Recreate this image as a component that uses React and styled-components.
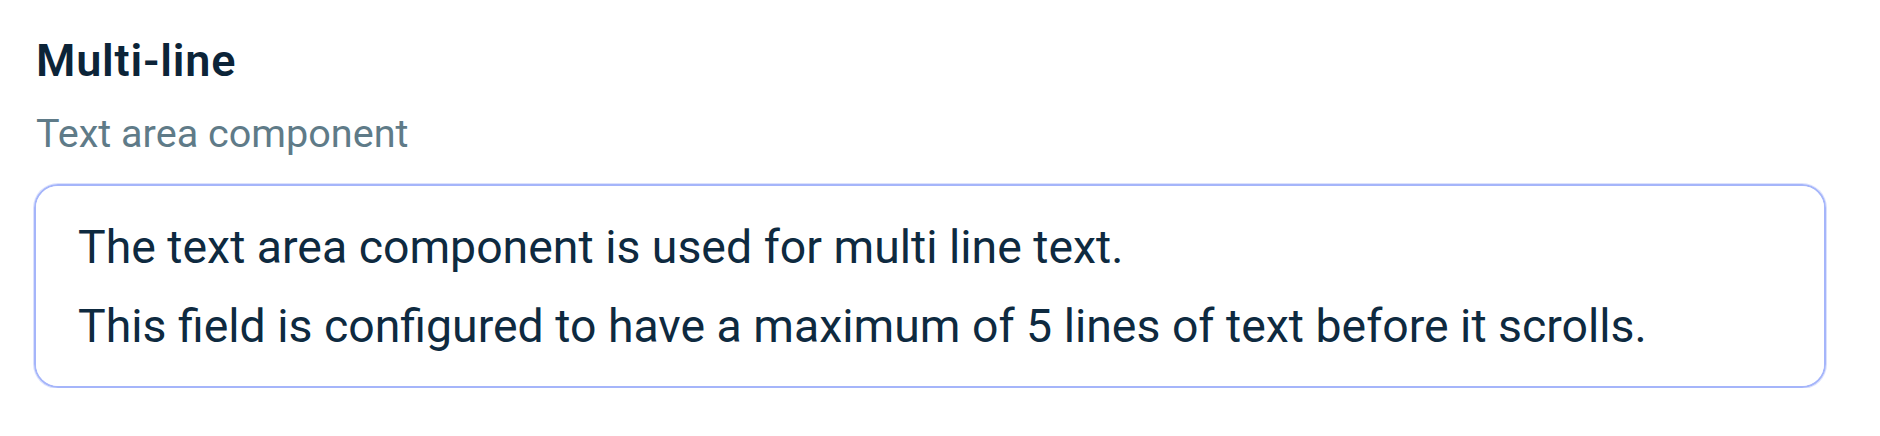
import React from "react";
import styled, { createGlobalStyle } from "styled-components";

const GlobalStyle = createGlobalStyle`
  html, body {
    margin: 0;
    padding: 0;
    background: #ffffff;
  }
  body {
    font-family: Roboto, "Noto Sans", sans-serif;
    -webkit-font-smoothing: antialiased;
  }
`;

const Section = styled.section`
  display: flex;
  flex-direction: column;
  padding: 29px 54px 0 34px;
`;

const Title = styled.h2`
  margin: 0;
  font-size: 45px;
  letter-spacing: 0.8px;
  line-height: 64px;
  font-weight: 600;
  color: #0c2438;
  padding-left: 2px;
`;

const Subtitle = styled.p`
  margin: 13px 0 0;
  font-size: 39.6px;
  line-height: 56px;
  font-weight: 400;
  color: #5f7b88;
  padding-left: 2px;
`;

const TextArea = styled.div`
  box-sizing: border-box;
  margin-top: 22px;
  height: 204px;
  border: 2px solid #a5b5fa;
  box-shadow: 0 0 0 1px rgba(165, 181, 250, 0.4);
  border-radius: 24px;
  padding: 22px 42px;
  overflow-y: auto;
  background: #ffffff;
`;

const Line = styled.p`
  margin: 0;
  font-size: 46.4px;
  line-height: 79px;
  color: #0e2a40;
  white-space: nowrap;
`;

export default function App() {
  const lines = [
    "The text area component is used for multi line text.",
    "This field is configured to have a maximum of 5 lines of text before it scrolls.",
  ];
  return (
    <>
      <GlobalStyle />
      <Section>
        <Title>Multi-line</Title>
        <Subtitle>Text area component</Subtitle>
        <TextArea>
          {lines.map((l) => (
            <Line key={l}>{l}</Line>
          ))}
        </TextArea>
      </Section>
    </>
  );
}
